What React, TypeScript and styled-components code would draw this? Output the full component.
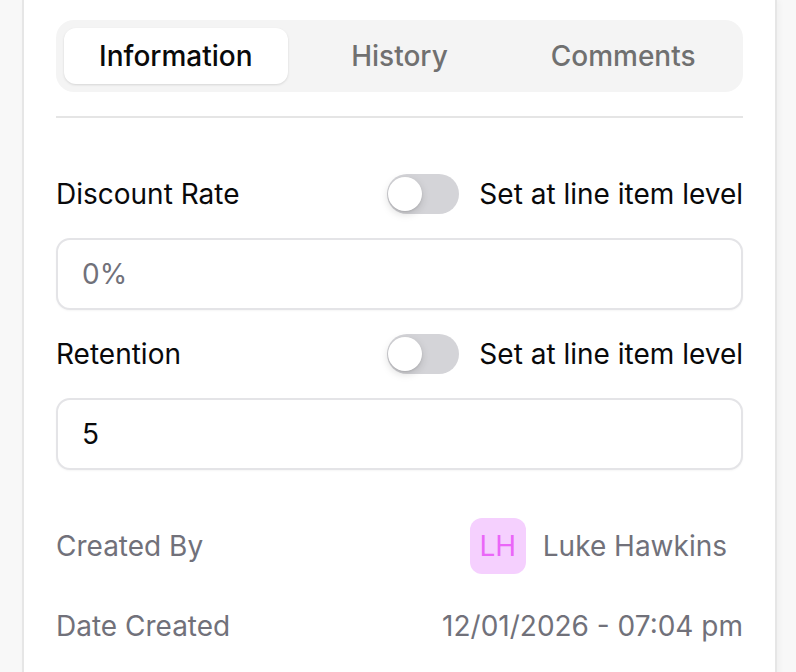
import React, { useState } from "react";
import styled, { createGlobalStyle } from "styled-components";

const GlobalStyle = createGlobalStyle`
  html, body {
    margin: 0;
    padding: 0;
    background: #f8f8f8;
    font-family: Inter, "Noto Sans", sans-serif;
    -webkit-font-smoothing: antialiased;
  }
  * { box-sizing: border-box; }
`;

const Page = styled.div`
  display: flex;
  min-height: 100vh;
  padding-left: 22px;
`;

const Panel = styled.section`
  width: 755px;
  min-height: 100vh;
  background: #ffffff;
  border-left: 2px solid #e6e6e6;
  border-right: 2px solid #e6e6e6;
  box-shadow: 2px 0 6px rgba(0, 0, 0, 0.04);
  padding: 20px 32px 0;
  display: flex;
  flex-direction: column;
`;

const TabList = styled.div`
  display: grid;
  grid-template-columns: repeat(3, 1fr);
  padding: 8px;
  background: #f4f4f4;
  border-radius: 18px;
`;

const Tab = styled.button<{ $active?: boolean }>`
  height: 56px;
  border: none;
  border-radius: 12px;
  font-family: Inter, sans-serif;
  font-size: 28px;
  font-weight: 500;
  cursor: pointer;
  background: ${(p) => (p.$active ? "#ffffff" : "transparent")};
  color: ${(p) => (p.$active ? "#0a0a0a" : "#707070")};
  box-shadow: ${(p) =>
    p.$active ? "0 1px 3px rgba(0,0,0,0.08), 0 1px 2px rgba(0,0,0,0.05)" : "none"};
`;

const Divider = styled.hr`
  margin: 24px 0 0;
  border: none;
  height: 2px;
  background: #e5e5e5;
`;

const Form = styled.div`
  display: flex;
  flex-direction: column;
  gap: 24px;
  margin-top: 56px;
`;

const FieldHead = styled.div`
  display: flex;
  align-items: center;
  justify-content: space-between;
  height: 40px;
`;

const Label = styled.span`
  font-size: 28px;
  color: #09090b;
`;

const ToggleWrap = styled.label`
  display: flex;
  align-items: center;
  gap: 20px;
  font-size: 28px;
  color: #09090b;
  cursor: pointer;
`;

const Track = styled.span<{ $on: boolean }>`
  position: relative;
  width: 72px;
  height: 40px;
  border-radius: 20px;
  background: ${(p) => (p.$on ? "#18181b" : "#d4d4d8")};
  flex-shrink: 0;
`;

const Knob = styled.span<{ $on: boolean }>`
  position: absolute;
  top: 3px;
  left: ${(p) => (p.$on ? "35px" : "1px")};
  width: 34px;
  height: 34px;
  border-radius: 50%;
  background: #ffffff;
  box-shadow: 0 3px 8px rgba(0, 0, 0, 0.15), 0 1px 2px rgba(0, 0, 0, 0.1);
`;

const Input = styled.input`
  width: 100%;
  height: 72px;
  border: 2px solid #e4e4e7;
  border-radius: 14px;
  padding: 0 24px;
  font-family: Inter, sans-serif;
  font-size: 28px;
  color: #09090b;
  background: #ffffff;
  box-shadow: 0 1px 2px rgba(0, 0, 0, 0.04);
  outline: none;
  &::placeholder {
    color: #71717a;
  }
`;

const Meta = styled.dl`
  display: flex;
  flex-direction: column;
  gap: 24px;
  margin: 48px 0 0;
`;

const MetaRow = styled.div`
  display: flex;
  align-items: center;
  justify-content: space-between;
  min-height: 56px;
`;

const MetaKey = styled.dt`
  font-size: 28px;
  color: #71717a;
`;

const MetaValue = styled.dd`
  margin: 0;
  font-size: 28px;
  color: #71717a;
`;

const UserChip = styled.dd`
  margin: 0;
  display: flex;
  align-items: center;
  gap: 17px;
  padding-right: 16px;
  font-size: 28px;
  color: #71717a;
`;

const Avatar = styled.span`
  width: 56px;
  height: 56px;
  border-radius: 12px;
  background: #f5d0fe;
  color: #ea66f8;
  display: flex;
  align-items: center;
  justify-content: center;
  font-size: 28px;
`;

function Toggle({ text }: { text: string }) {
  const [on, setOn] = useState(false);
  return (
    <ToggleWrap onClick={() => setOn(!on)}>
      <Track $on={on}>
        <Knob $on={on} />
      </Track>
      {text}
    </ToggleWrap>
  );
}

export default function App() {
  const [tab, setTab] = useState("Information");
  return (
    <>
      <GlobalStyle />
      <Page>
        <Panel>
          <TabList>
            {["Information", "History", "Comments"].map((t) => (
              <Tab key={t} $active={tab === t} onClick={() => setTab(t)}>
                {t}
              </Tab>
            ))}
          </TabList>
          <Divider />
          <Form>
            <FieldHead>
              <Label>Discount Rate</Label>
              <Toggle text="Set at line item level" />
            </FieldHead>
            <Input placeholder="0%" />
            <FieldHead>
              <Label>Retention</Label>
              <Toggle text="Set at line item level" />
            </FieldHead>
            <Input defaultValue="5" />
          </Form>
          <Meta>
            <MetaRow>
              <MetaKey>Created By</MetaKey>
              <UserChip>
                <Avatar>LH</Avatar>
                Luke Hawkins
              </UserChip>
            </MetaRow>
            <MetaRow>
              <MetaKey>Date Created</MetaKey>
              <MetaValue>12/01/2026 - 07:04 pm</MetaValue>
            </MetaRow>
            <MetaRow>
              <MetaKey>Last Modified</MetaKey>
              <MetaValue>12/01/2026 - 08:53 pm</MetaValue>
            </MetaRow>
          </Meta>
        </Panel>
      </Page>
    </>
  );
}
